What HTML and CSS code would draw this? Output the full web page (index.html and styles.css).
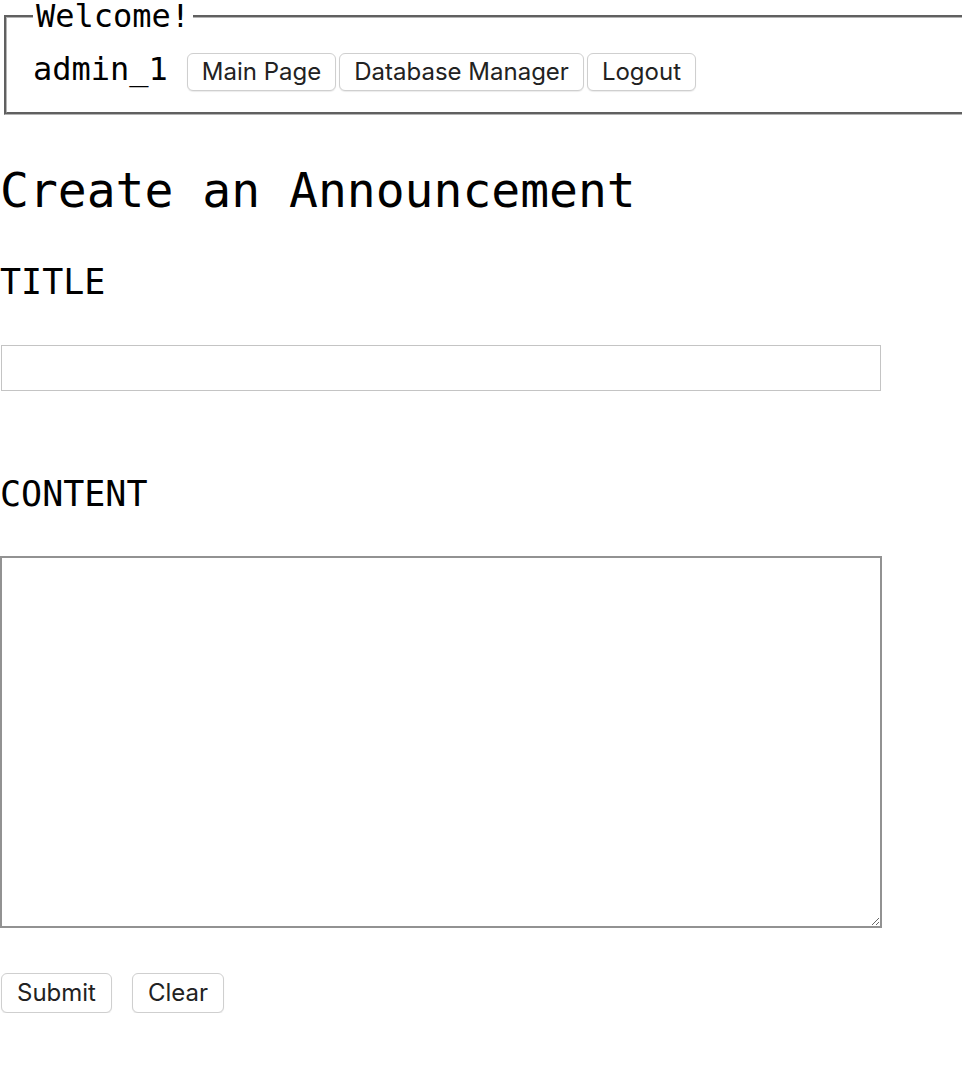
FILE: index.html
```html
<!DOCTYPE html>
<html lang="en">
<head>
<meta charset="utf-8">
<title>Create an Announcement</title>
<link rel="stylesheet" href="styles.css">
</head>
<body>
<fieldset class="welcome">
  <legend class="welcome-legend">Welcome!</legend>
  <div class="user-row">
    <span class="user-name">admin_1</span>
    <button class="btn nav-btn" type="button">Main Page</button>
    <button class="btn nav-btn" type="button">Database Manager</button>
    <button class="btn nav-btn" type="button">Logout</button>
  </div>
</fieldset>

<h1 class="page-title">Create an Announcement</h1>

<form class="announce-form">
  <label class="field-label label-title" for="title">TITLE</label>
  <input class="title-input" id="title" type="text">
  <label class="field-label label-content" for="content">CONTENT</label>
  <textarea class="content-input" id="content"></textarea>
  <div class="form-actions">
    <button class="btn form-btn btn-submit" type="submit">Submit</button>
    <button class="btn form-btn" type="reset">Clear</button>
  </div>
</form>
</body>
</html>
```

FILE: styles.css
```css
html {
  overflow-x: hidden;
}

body {
  margin: 0;
  background: #ffffff;
  color: #000000;
  font-family: "DejaVu Sans Mono", monospace;
  overflow-x: hidden;
}

.welcome {
  margin: 0 -40px 0 4px;
  padding: 21px 0 21px 26px;
  border: 3px groove #b4b4b4;
  min-width: 0;
}

.welcome-legend {
  padding: 0 3px;
  font-family: "DejaVu Sans Mono", monospace;
  font-size: 32px;
  line-height: 32px;
}

.user-row {
  display: flex;
  align-items: baseline;
}

.user-name {
  font-size: 32px;
  line-height: 30px;
  margin-right: 19px;
}

.btn {
  font-family: Inter, "Liberation Sans", sans-serif;
  font-size: 24px;
  line-height: 28px;
  color: #222222;
  background: #ffffff;
  border: 1px solid #cfcfcf;
  border-radius: 6px;
  box-shadow: 0 1px 1px rgba(0, 0, 0, 0.08);
  padding: 4px 14px;
  margin: 0;
  cursor: pointer;
}

.nav-btn {
  margin-right: 3px;
}

.page-title {
  margin: 51px 0 0 0;
  font-family: "DejaVu Sans Mono", monospace;
  font-size: 48px;
  line-height: 48px;
  font-weight: normal;
}

.announce-form {
  display: flex;
  flex-direction: column;
  align-items: flex-start;
}

.field-label {
  display: block;
  font-family: "DejaVu Sans Mono", monospace;
  font-size: 35px;
  line-height: 35px;
}

.label-title {
  margin-top: 51px;
}

.title-input {
  box-sizing: border-box;
  width: 880px;
  height: 46px;
  margin: 45px 0 0 1px;
  border: 1px solid #c4c4c4;
  padding: 0 8px;
  font-size: 20px;
}

.label-content {
  margin-top: 86px;
}

.content-input {
  box-sizing: border-box;
  width: 882px;
  height: 372px;
  margin: 44px 0 0 0;
  border: 2px solid #929292;
  padding: 4px;
  font-size: 20px;
}

.form-actions {
  display: flex;
  gap: 20px;
  margin-top: 45px;
}

.form-btn {
  padding: 5px 15px;
}

.btn-submit {
  margin-left: 1px;
}
```
